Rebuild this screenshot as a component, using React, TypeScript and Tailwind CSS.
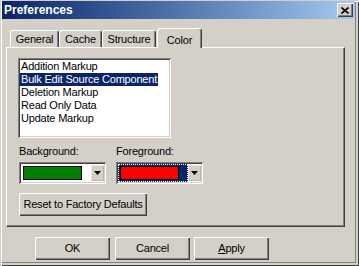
const raised =
  "shadow-[inset_1px_1px_0_#ffffff,inset_-1px_-1px_0_#404040,inset_-2px_-2px_0_#808080]";
const sunken =
  "shadow-[inset_1px_1px_0_#808080,inset_-1px_-1px_0_#ffffff,inset_2px_2px_0_#404040,inset_-2px_-2px_0_#d4d0c8]";

function Arrow() {
  return (
    <svg width="7" height="4" viewBox="0 0 7 4">
      <polygon points="0,0 7,0 3.5,4" fill="#000" />
    </svg>
  );
}

function Combo({ color, focused }: { color: string; focused?: boolean }) {
  return (
    <div className={`w-[87px] h-[22px] bg-white p-[2px] flex ${sunken}`}>
      <div
        className={`w-[70px] h-[18px] flex items-center pl-[2px] ${
          focused ? "bg-[#0a246a] outline-1 outline-dotted outline-white -outline-offset-1" : ""
        }`}
      >
        <div className="w-[59px] h-[14px] border border-black" style={{ backgroundColor: color }} />
      </div>
      <div className="ml-auto mt-[1px] w-[13px] h-[16px] bg-[#d4d0c8] flex items-center justify-center shadow-[inset_1px_1px_0_#e8e6e0,inset_-1px_-1px_0_#b8b4ac]">
        <Arrow />
      </div>
    </div>
  );
}

export default function App() {
  const tab =
    "h-[17px] flex items-center justify-center border-t border-l border-white border-r border-r-[#404040] rounded-t-[3px] shadow-[inset_-1px_0_0_#808080] bg-[#d4d0c8]";
  return (
    <div className="w-[359px] h-[266px] bg-[#d4d0c8] flex flex-col font-['Liberation_Sans',Arial,sans-serif] text-[11px] tracking-[-0.2px] text-black shadow-[inset_1px_1px_0_#d4d0c8,inset_2px_2px_0_#ffffff,inset_-1px_-1px_0_#404040,inset_-3px_-3px_0_#d4d0c8,inset_-4px_-4px_0_#808080] select-none">
      {/* title bar */}
      <div className="mt-[1px] ml-[2px] w-[353px] h-[18px] bg-linear-to-r from-[#0a246a] to-[#a6caf0] flex items-center justify-between pl-[2px] pr-[2px]">
        <span className="text-white font-bold text-[12px] tracking-normal leading-none">Preferences</span>
        <div className={`w-[16px] h-[14px] bg-[#d4d0c8] flex items-center justify-center ${raised}`}>
          <svg width="8" height="7" viewBox="0 0 8 7">
            <path d="M0.5 0.5L7.5 6.5M7.5 0.5L0.5 6.5" stroke="#000" strokeWidth="1.6" />
          </svg>
        </div>
      </div>

      {/* tabs */}
      <div className="mt-[9px] ml-[10px] h-[19px] flex items-end">
        <div className={`${tab} w-[49px]`}>General</div>
        <div className={`${tab} w-[43px]`}>Cache</div>
        <div className={`${tab} w-[54px]`}>Structure</div>
        <div className="relative z-10 -mb-px ml-[1px] w-[45px] h-[20px] flex items-start justify-center pt-[3px] bg-[#d4d0c8] border-t border-l border-white border-r border-r-[#404040] rounded-t-[3px] shadow-[inset_-1px_0_0_#808080]">
          Color
        </div>
      </div>

      {/* panel */}
      <div className="ml-[6px] w-[339px] h-[180px] border border-white border-r-[#404040] border-b-[#404040] shadow-[inset_-1px_-1px_0_#808080] pt-[10px] pl-[11px]">
        <div className={`w-[153px] h-[80px] bg-white pt-[2px] pl-[2px] ${sunken}`}>
          {[
            "Addition Markup",
            "Bulk Edit Source Component",
            "Deletion Markup",
            "Read Only Data",
            "Update Markup",
          ].map((t, i) => (
            <div key={t} className="h-[13px] leading-[13px]">
              <span
                className={`inline-block h-[13px] px-[1px] ${i === 1 ? "bg-[#0a246a] text-white" : ""}`}
              >
                {t}
              </span>
            </div>
          ))}
        </div>

        <div className="flex mt-[7px] ml-[1px]">
          <div className="w-[97px]">
            <div className="h-[13px] leading-[13px]">Background:</div>
            <div className="mt-[4px]">
              <Combo color="#008000" />
            </div>
          </div>
          <div>
            <div className="h-[13px] leading-[13px]">Foreground:</div>
            <div className="mt-[4px]">
              <Combo color="#ff0000" focused />
            </div>
          </div>
        </div>

        <div className={`mt-[9px] ml-[1px] w-[128px] h-[23px] flex items-center justify-center ${raised}`}>
          Reset to Factory Defaults
        </div>
      </div>

      {/* buttons */}
      <div className="flex mt-[10px] ml-[35px]">
        <div className={`w-[75px] h-[23px] flex items-center justify-center ${raised}`}>OK</div>
        <div className={`ml-[5px] w-[75px] h-[23px] flex items-center justify-center ${raised}`}>Cancel</div>
        <div className={`ml-[4px] w-[75px] h-[23px] flex items-center justify-center ${raised}`}>
          <span>
            <span className="underline">A</span>pply
          </span>
        </div>
      </div>
    </div>
  );
}
